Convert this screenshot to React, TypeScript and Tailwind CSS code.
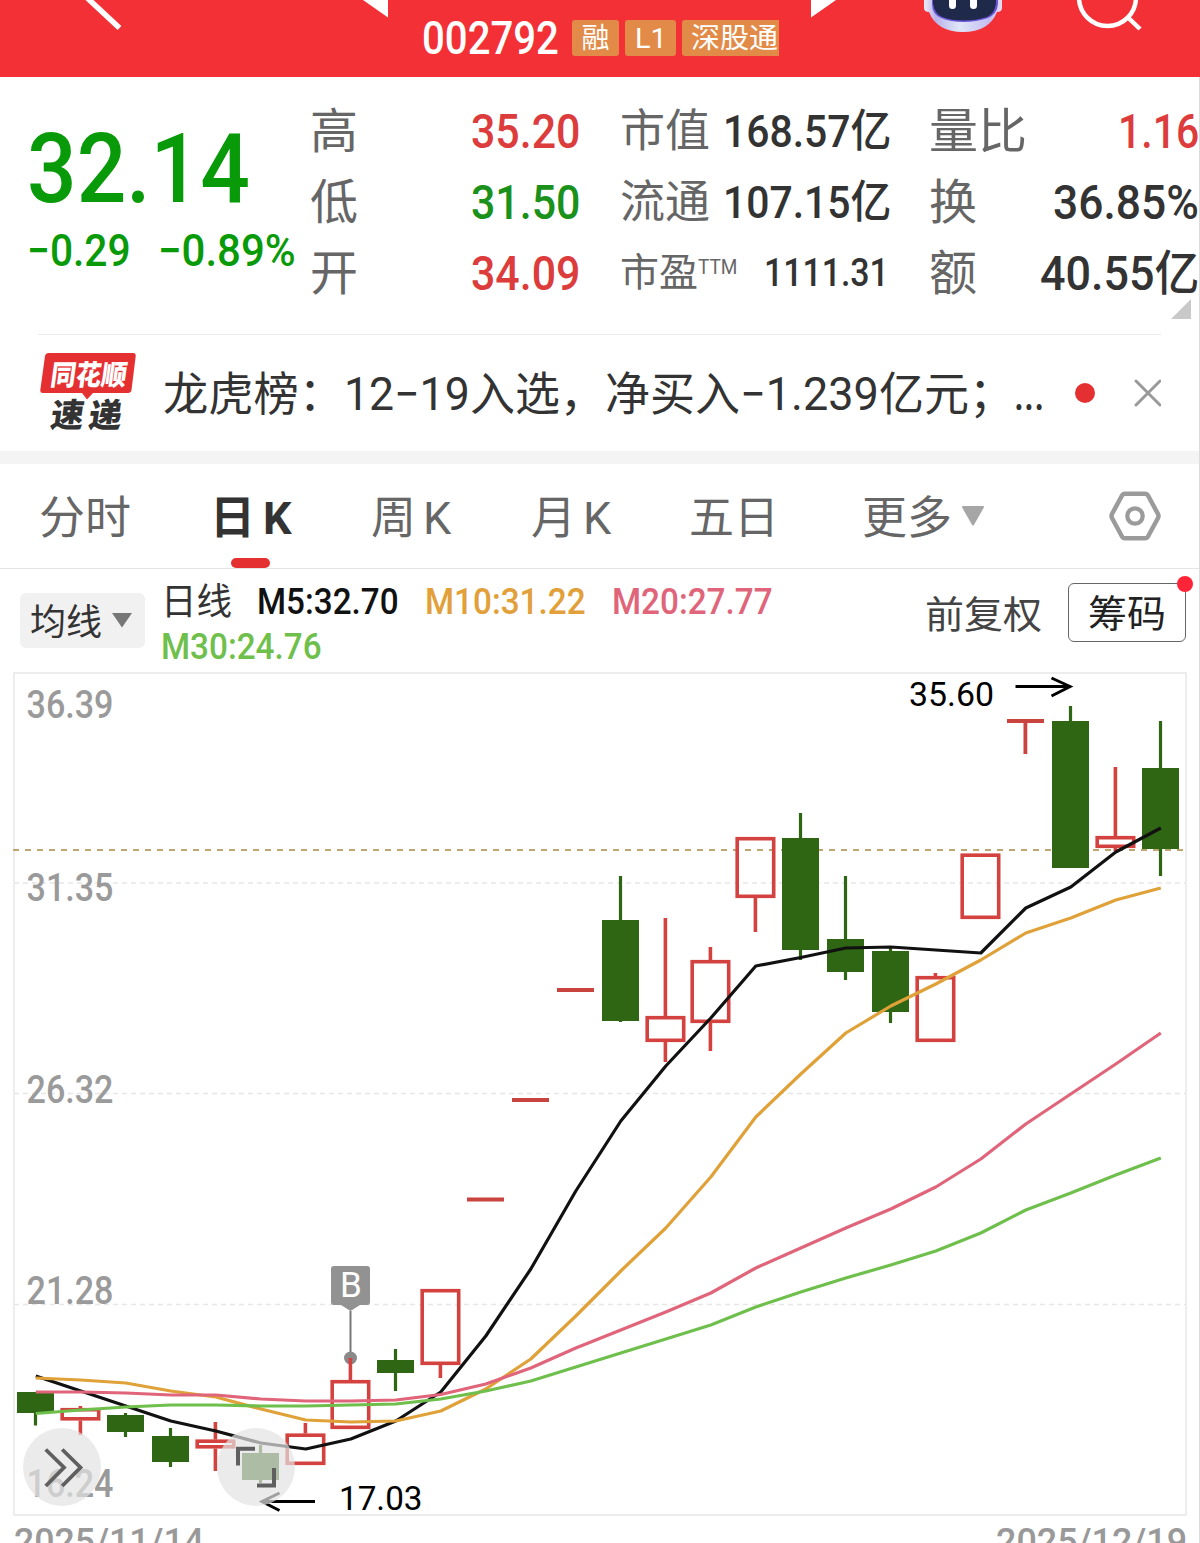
import { useLayoutEffect, useRef, useState } from 'react';
import type { ReactNode } from 'react';
import clsx from 'clsx';

interface Candle {
  kind: 'up' | 'down' | 'flat';
  top: number;
  bottom: number;
  high: number;
  low: number;
}

const candles: Candle[] = [
  { kind: 'down', top: 1392, bottom: 1413, high: 1392, low: 1425.5 },
  { kind: 'up', top: 1408, bottom: 1420.5, high: 1406, low: 1435 },
  { kind: 'down', top: 1415, bottom: 1432, high: 1413, low: 1437 },
  { kind: 'down', top: 1436, bottom: 1462, high: 1428, low: 1467 },
  { kind: 'up', top: 1439.5, bottom: 1448.5, high: 1422, low: 1471 },
  { kind: 'down', top: 1453, bottom: 1480, high: 1445, low: 1483 },
  { kind: 'up', top: 1433.5, bottom: 1465, high: 1423, low: 1465 },
  { kind: 'up', top: 1380, bottom: 1429, high: 1358, low: 1429 },
  { kind: 'down', top: 1360, bottom: 1373, high: 1349, low: 1391 },
  { kind: 'up', top: 1289, bottom: 1365, high: 1289, low: 1378 },
  { kind: 'flat', top: 1199.5, bottom: 1199.5, high: 1199.5, low: 1199.5 },
  { kind: 'flat', top: 1100, bottom: 1100, high: 1100, low: 1100 },
  { kind: 'flat', top: 990, bottom: 990, high: 990, low: 990 },
  { kind: 'down', top: 920, bottom: 1021, high: 876, low: 1022 },
  { kind: 'up', top: 1016, bottom: 1042, high: 918, low: 1062 },
  { kind: 'up', top: 960, bottom: 1023, high: 947, low: 1051 },
  { kind: 'up', top: 837, bottom: 898, high: 837, low: 932 },
  { kind: 'down', top: 838, bottom: 950, high: 813, low: 960 },
  { kind: 'down', top: 939, bottom: 972, high: 876, low: 980 },
  { kind: 'down', top: 951, bottom: 1012, high: 947, low: 1023 },
  { kind: 'up', top: 976, bottom: 1042, high: 973, low: 1042 },
  { kind: 'up', top: 853.5, bottom: 919, high: 853.5, low: 919 },
  { kind: 'flat', top: 721, bottom: 721, high: 721, low: 754 },
  { kind: 'down', top: 721, bottom: 868, high: 706, low: 868 },
  { kind: 'up', top: 836, bottom: 848, high: 767, low: 851 },
  { kind: 'down', top: 768, bottom: 849, high: 721, low: 876 },
];

const averages = [
  {
    color: '#111111',
    values: [1376, 1391, 1406, 1421, 1431, 1443, 1449, 1439, 1421, 1392, 1336, 1269, 1191, 1121, 1066, 1018, 966, 957.5, 948, 947, 950, 953, 908, 887, 852, 828],
  },
  {
    color: '#dfa138',
    values: [1378, 1380, 1383, 1391, 1397, 1409, 1420, 1422, 1421, 1411, 1389, 1359, 1316, 1271, 1228, 1177, 1117, 1074, 1033, 1006, 984, 960, 933, 918, 900, 888],
  },
  {
    color: '#e0657a',
    values: [1392, 1392, 1393, 1395, 1395, 1399, 1401, 1401, 1400, 1394.5, 1384, 1368, 1348, 1330, 1312, 1293, 1268, 1248, 1228, 1209, 1187, 1159, 1124, 1094, 1064, 1033],
  },
  {
    color: '#6fbf4c',
    values: [1413.5, 1410, 1407, 1405, 1405, 1406, 1406, 1405, 1404, 1399, 1391, 1381, 1367, 1353, 1339, 1325, 1307, 1292, 1278, 1265, 1251, 1233, 1210, 1193, 1175, 1158],
  },
];

const priceLabels = [
  { text: '36.39', y: 718 },
  { text: '31.35', y: 901 },
  { text: '26.32', y: 1103 },
  { text: '21.28', y: 1304 },
  { text: '16.24', y: 1497 },
];

const candleX = (i: number) => 35.4 + i * 45;

// Squeezes a line of text to the width of its box
function FitText({ className, children }: { className: string; children: ReactNode }) {
  const box = useRef<HTMLSpanElement>(null);
  const inner = useRef<HTMLSpanElement>(null);
  const [scale, setScale] = useState(1);

  useLayoutEffect(() => {
    if (box.current && inner.current) {
      setScale(box.current.clientWidth / inner.current.offsetWidth);
    }
  }, []);

  return (
    <span ref={box} className={clsx('block shrink-0 whitespace-nowrap', className)}>
      <span ref={inner} className="inline-block origin-left" style={{ transform: `scaleX(${scale})` }}>
        {children}
      </span>
    </span>
  );
}

function Header() {
  return (
    <header className="flex h-[77px] items-start bg-[#f23036] text-white">
      <svg className="h-[32px] w-[122px] shrink-0" viewBox="0 0 122 32">
        <path d="M83 -6L119.500 28" stroke="#fff" strokeWidth="5.500" fill="none" />
      </svg>
      <svg className="ml-[241px] h-[18px] w-[25px] shrink-0" viewBox="0 0 25 18">
        <path d="M0 0H25V17.500Z" fill="#fff" />
      </svg>
      <div className="ml-[34px] flex w-[357px] shrink-0 pt-[10px]">
        <FitText className="w-[137px] text-[46px] leading-[56px] font-medium">002792</FitText>
        <div className="mt-[10px] ml-[13px] flex h-[36px] shrink-0 gap-[6px] text-[28px] leading-[37px]">
          <div className="w-[47px] rounded-[3px] bg-[#e28b48] text-center">融</div>
          <div className="flex w-[51px] justify-center rounded-[3px] bg-[#e28b48]">
            <FitText className="w-[32px]">L1</FitText>
          </div>
          <div className="w-[97px] rounded-l-[3px] bg-[#e28b48] pl-[9px]">
            <FitText className="w-[87px]">深股通</FitText>
          </div>
        </div>
      </div>
      <svg className="ml-[32px] h-[18px] w-[25px] shrink-0" viewBox="0 0 25 18">
        <path d="M0 0H25L0 17.500Z" fill="#fff" />
      </svg>
      <svg className="ml-[88px] h-[33px] w-[78px] shrink-0" viewBox="0 0 78 33">
        <defs>
          <linearGradient id="helmet" x1="0" y1="0" x2="1" y2="0">
            <stop offset="0" stopColor="#f1e9f6" />
            <stop offset="0.150" stopColor="#b9b3ea" />
            <stop offset="0.450" stopColor="#dfe6f8" />
            <stop offset="0.850" stopColor="#c3bdf2" />
            <stop offset="1" stopColor="#e9dcf0" />
          </linearGradient>
        </defs>
        <path d="M0 -4H78V8Q78 12 73 12Q65 32 39 32Q13 32 5 12Q0 12 0 8Z" fill="url(#helmet)" />
        <path d="M8 -6H74V4Q73 14 64 18Q52 22 40 22Q26 22 17 18Q8 14 8 4Z" fill="#6a55d8" />
        <path d="M9 -6H72V3Q71 13 63 17Q52 20.500 40 20.500Q27 20.500 18 17Q10 13 9 3Z" fill="#1f2a4b" />
        <path d="M28.500 -4V5.500M49.500 -4V5.500" stroke="#fff" strokeWidth="7" strokeLinecap="round" />
      </svg>
      <svg className="ml-[74px] h-[32px] w-[66px] shrink-0" viewBox="0 0 66 32" fill="none" stroke="#fff" strokeWidth="4.500">
        <circle cx="31.500" cy="-2.500" r="28.500" />
        <path d="M52 17.500L64 29" />
      </svg>
    </header>
  );
}

function Quote() {
  return (
    <section className="relative flex h-[257px] pt-[19px]">
      <div className="w-[310px] shrink-0 pt-[25px] pl-[27px] text-[#099a09]">
        <FitText className="w-[223px] text-[96px] leading-[96px] font-medium">32.14</FitText>
        <div className="mt-[10px] flex gap-[27px] text-[45px] leading-[48px] font-medium">
          <FitText className="w-[104px]">−0.29</FitText>
          <FitText className="w-[138px]">−0.89%</FitText>
        </div>
      </div>

      <div className="w-[270px] shrink-0 text-[48px] leading-[71px] font-medium">
        <div className="flex justify-between">
          <span className="font-normal text-[#666]">高</span>
          <FitText className="w-[109px] text-[#dc3c3c]">35.20</FitText>
        </div>
        <div className="flex justify-between">
          <span className="font-normal text-[#666]">低</span>
          <FitText className="w-[109px] text-[#1a911a]">31.50</FitText>
        </div>
        <div className="flex justify-between">
          <span className="font-normal text-[#666]">开</span>
          <FitText className="w-[109px] text-[#dc3c3c]">34.09</FitText>
        </div>
      </div>

      <div className="ml-[40px] w-[271px] shrink-0 text-[45px] leading-[71px] font-medium text-[#333]">
        <div className="flex justify-between">
          <span className="font-normal text-[#666]">市值</span>
          <FitText className="w-[168px]">168.57亿</FitText>
        </div>
        <div className="flex justify-between">
          <span className="font-normal text-[#666]">流通</span>
          <FitText className="w-[168px]">107.15亿</FitText>
        </div>
        <div className="flex justify-between pr-[2px] text-[39px]">
          <div className="flex font-normal text-[#666]">
            <span>市盈</span>
            <FitText className="w-[39px] text-[20px] leading-[59px]">TTM</FitText>
          </div>
          <FitText className="w-[125px]">1111.31</FitText>
        </div>
      </div>

      <div className="ml-[38px] w-[270px] shrink-0 text-[48px] leading-[71px] font-medium text-[#333]">
        <div className="flex justify-between">
          <FitText className="w-[98px] font-normal text-[#666]">量比</FitText>
          <FitText className="w-[81px] text-[#dc3c3c]">1.16</FitText>
        </div>
        <div className="flex justify-between">
          <span className="font-normal text-[#666]">换</span>
          <FitText className="w-[146px]">36.85%</FitText>
        </div>
        <div className="flex justify-between">
          <span className="font-normal text-[#666]">额</span>
          <FitText className="w-[159px]">40.55亿</FitText>
        </div>
      </div>

      <svg className="absolute right-[8px] bottom-[15px] h-[20px] w-[20px]" viewBox="0 0 20 20">
        <path d="M20 0V20H0Z" fill="#c9c9c9" />
      </svg>
    </section>
  );
}

function NewsBar() {
  return (
    <section className="mx-[38px] flex h-[117px] items-center border-t border-[#ebebeb] text-[46px] leading-[62px] text-[#333]">
      <svg className="ml-[2px] h-[80px] w-[96px] shrink-0 overflow-visible" viewBox="0 0 96 80">
        <path d="M9 0H93Q96 0 95.700 3L91.500 37Q91 40 88 40H53L47 46.500L42 40H3Q0 40 0.300 37L5 3Q5.500 0 9 0Z" fill="#e53032" />
        <g transform="skewX(-8)" fontWeight="900">
          <text x="14" y="32" fontSize="28" fill="#fff" textLength="76" lengthAdjust="spacingAndGlyphs">同花顺</text>
          <text x="20" y="74" fontSize="33" fill="#333" textLength="33" lengthAdjust="spacingAndGlyphs">速</text>
          <text x="58" y="74" fontSize="33" fill="#333" textLength="33" lengthAdjust="spacingAndGlyphs">递</text>
        </g>
      </svg>
      <div className="ml-[27px] flex pt-[2px]">
        <FitText className="w-[181px]">龙虎榜：</FitText>
        <FitText className="w-[126px]">12−19</FitText>
        <FitText className="w-[135px]">入选，</FitText>
        <FitText className="w-[135px]">净买入</FitText>
        <FitText className="w-[139px]">−1.239</FitText>
        <FitText className="w-[135px]">亿元；</FitText>
        <FitText className="w-[30px] font-medium">...</FitText>
      </div>
      <span className="ml-[31px] h-[20px] w-[20px] shrink-0 rounded-full bg-[#e53032]" />
      <svg className="ml-auto h-[28px] w-[28px] shrink-0" viewBox="0 0 28 28">
        <path d="M3 2L27 26M27 2L3 26" stroke="#999" strokeWidth="3" strokeLinecap="round" />
      </svg>
    </section>
  );
}

function Tabs() {
  return (
    <nav className="flex h-[105px] border-b border-[#e4e4e4] text-[45px] leading-[109px] text-[#666]">
      <FitText className="ml-[39px] w-[92px]">分时</FitText>
      <div className="relative ml-[79px] flex w-[88px] gap-[8px] font-bold text-[#333]">
        <span>日</span>
        <span>K</span>
        <span className="absolute bottom-0 left-[21px] h-[10px] w-[39px] rounded-full bg-[#e53032]" />
      </div>
      <div className="ml-[73px] flex w-[88px] gap-[7px]">
        <span>周</span>
        <span>K</span>
      </div>
      <div className="ml-[72px] flex w-[88px] gap-[7px]">
        <span>月</span>
        <span>K</span>
      </div>
      <span className="ml-[70px] w-[90px]">五日</span>
      <span className="ml-[83px] w-[90px]">更多</span>
      <svg className="mt-[42px] ml-[9px] h-[20px] w-[24px]" viewBox="0 0 24 20">
        <path d="M2 1H22L12 18.500Z" fill="#a6a6a6" stroke="#a6a6a6" strokeWidth="2" strokeLinejoin="round" />
      </svg>
      <svg className="mt-[27px] ml-[124px] h-[50px] w-[52px]" viewBox="0 0 52 50" fill="none" stroke="#9b9b9b">
        <path d="M16 2.700H36Q38 2.700 39 4.500L49 23Q50 25 49 27L39 45.500Q38 47.300 36 47.300H16Q14 47.300 13 45.500L3 27Q2 25 3 23L13 4.500Q14 2.700 16 2.700Z" strokeWidth="4.500" />
        <circle cx="26" cy="25" r="7.700" strokeWidth="4.300" />
      </svg>
    </nav>
  );
}

function Legend() {
  return (
    <div className="flex h-[101px] items-start text-[37px] leading-[45px]">
      <div className="mt-[24px] ml-[20px] flex h-[55px] w-[125px] shrink-0 items-center rounded-[6px] bg-[#f1f1f1] pl-[10px] text-[36px] text-[#333]">
        <FitText className="w-[72px] pt-[5px]">均线</FitText>
        <svg className="ml-[10px] h-[15px] w-[20px]" viewBox="0 0 20 15">
          <path d="M0 0H20L10 14.500Z" fill="#777" />
        </svg>
      </div>
      <div className="mt-[10px] ml-[16px] flex w-[740px] shrink-0 flex-wrap font-medium">
        <FitText className="mr-[25px] w-[71px] pt-px font-normal text-[#333]">日线</FitText>
        <FitText className="mr-[26px] w-[142px] text-[#111]">M5:32.70</FitText>
        <FitText className="mr-[26px] w-[161px] text-[#e2a03a]">M10:31.22</FitText>
        <FitText className="mr-[80px] w-[161px] text-[#e0657a]">M20:27.77</FitText>
        <FitText className="-mt-px w-[161px] text-[#6fbf4c]">M30:24.76</FitText>
      </div>
      <FitText className="mt-[24px] ml-[24px] w-[117px] text-[38px] text-[#444]">前复权</FitText>
      <div className="relative mt-[14px] ml-[26px] flex h-[59px] w-[118px] shrink-0 items-center justify-center rounded-[6px] border border-[#666] text-[38px] text-[#222]">
        <FitText className="w-[78px] pt-[4px] leading-[57px]">筹码</FitText>
        <span className="absolute -top-[8px] -right-[8px] h-[16px] w-[16px] rounded-full bg-[#ff2437]" />
      </div>
    </div>
  );
}

function CandleShape({ candle, x }: { candle: Candle; x: number }) {
  if (candle.kind === 'down') {
    return (
      <g fill="#2f6614">
        <rect x={x - 1.5} y={candle.high} width="3.200" height={candle.low - candle.high} />
        <rect x={x - 18.4} y={candle.top} width="37" height={candle.bottom - candle.top} />
      </g>
    );
  }
  if (candle.kind === 'flat') {
    return (
      <g fill="#c9433f">
        <rect x={x - 18.4} y={candle.top - 2} width="37" height="4" />
        <rect x={x - 1.9} y={candle.high} width="3.800" height={candle.low - candle.high} />
      </g>
    );
  }
  return (
    <g stroke="#d4423f" strokeWidth="3.600" fill="none">
      <path d={`M${x} ${candle.high}V${candle.top}M${x} ${candle.bottom}V${candle.low}`} />
      <rect x={x - 18.2} y={candle.top + 1.7} width="36.500" height={candle.bottom - candle.top - 3.4} />
    </g>
  );
}

function Chart() {
  return (
    <svg className="block h-[846px] w-full" viewBox="0 670 1199 846">
      <g stroke="#e6e6e6" strokeWidth="1.500" strokeDasharray="5 4">
        <path d="M14 883H1186" />
        <path d="M14 1093.500H1186" />
        <path d="M14 1304.500H1186" />
      </g>
      <rect x="14" y="673" width="1172" height="842" fill="none" stroke="#ededed" strokeWidth="2" />

      <g fontSize="38" fontWeight="500" fill="#9a9a9a">
        {priceLabels.map((label) => (
          <text key={label.text} x="26.500" y={label.y} textLength="87" lengthAdjust="spacingAndGlyphs">
            {label.text}
          </text>
        ))}
      </g>

      <path d="M13 850H1184" stroke="#bda670" strokeWidth="2" strokeDasharray="6 6" />

      <path d="M334 1266H367Q370 1266 370 1269V1302Q370 1305 367 1305H360L350.500 1311L341 1305H334Q331 1305 331 1302V1269Q331 1266 334 1266Z" fill="#929292" />
      <path d="M350.500 1311V1354" stroke="#777" strokeWidth="2" />
      <circle cx="350.500" cy="1358" r="6.500" fill="#8a8a8a" />
      <text x="340" y="1297" fontSize="35" fill="#fff">B</text>

      {candles.map((candle, i) => (
        <CandleShape key={i} candle={candle} x={candleX(i)} />
      ))}

      {averages.map((line) => (
        <polyline
          key={line.color}
          points={line.values.map((y, i) => `${candleX(i) + 0.4},${y}`).join(' ')}
          fill="none"
          stroke={line.color}
          strokeWidth="3.200"
          strokeLinejoin="round"
        />
      ))}

      <g fontSize="34" fill="#000">
        <text x="909" y="706" textLength="85" lengthAdjust="spacingAndGlyphs">35.60</text>
        <text x="339" y="1509.500" textLength="83.500" lengthAdjust="spacingAndGlyphs">17.03</text>
      </g>
      <g stroke="#000" strokeWidth="3" fill="none">
        <path d="M1015.500 686.500H1070M1051.500 678L1070 686.500L1051.500 696" />
        <path d="M315 1501.500H262M279.500 1493L262 1501.500L279.500 1510.500" />
      </g>

      <g fill="#e2e2e2" fillOpacity="0.700">
        <circle cx="62" cy="1467" r="39" />
        <circle cx="256" cy="1467" r="39" />
      </g>
      <g stroke="#5f5f5f" strokeWidth="3.800" fill="none">
        <path d="M45.700 1449.500L64 1467.500L45.700 1486M62.200 1449.500L80.500 1467.500L62.200 1486" />
        <path d="M238 1465.500V1448.800H255M274 1468V1485.500H257" strokeWidth="4" />
      </g>
    </svg>
  );
}

export default function App() {
  return (
    <div className="h-[1543px] w-[1200px] overflow-hidden bg-white font-['Roboto','Noto_Sans_CJK_SC',sans-serif]">
      <Header />
      <main className="h-[1466px] overflow-hidden border-r border-[#dcdcdc]">
        <Quote />
        <NewsBar />
        <div className="h-[13px] bg-[#f4f4f4]" />
        <Tabs />
        <Legend />
        <Chart />
        <div className="flex justify-between pt-[4px] pr-[12px] pl-[14px] text-[37px] leading-[44px] font-medium text-[#999]">
          <FitText className="w-[190px]">2025/11/14</FitText>
          <FitText className="w-[191px]">2025/12/19</FitText>
        </div>
      </main>
    </div>
  );
}
